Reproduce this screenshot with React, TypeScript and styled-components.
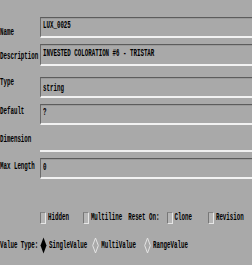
import React from "react";
import styled, { createGlobalStyle } from "styled-components";

const GlobalStyle = createGlobalStyle`
  html, body {
    margin: 0;
    padding: 0;
    background: #a9a9a9;
    overflow: hidden;
  }
`;

const Panel = styled.div`
  width: 252px;
  height: 265px;
  background: #a9a9a9;
  color: #000;
  font-family: "Liberation Mono", monospace;
  font-size: 5.8px;
  font-weight: bold;
  line-height: 8px;
  overflow: hidden;
  box-sizing: border-box;
`;

// narrow bitmap-like font: mono at small size, stretched vertically
const T = styled.span`
  display: inline-block;
  white-space: nowrap;
  transform: scaleY(1.75);
  transform-origin: center;
`;

const Row = styled.div<{ $mt: number; $h?: number }>`
  display: grid;
  grid-template-columns: 40px 1fr;
  margin-top: ${p => p.$mt}px;
  height: ${p => p.$h || 21}px;
`;

const Label = styled.div<{ $pt: number }>`
  padding-top: ${p => p.$pt}px;
  white-space: nowrap;
`;

const TextBox = styled.div<{ $pt: number }>`
  box-sizing: border-box;
  border-top: 1px solid #5c5c5c;
  border-left: 1px solid #6a6a6a;
  border-bottom: 2px solid #f2f2f2;
  box-shadow: inset 0 1px 0 #9a9a9a;
  margin-right: -20px;
  padding: ${p => p.$pt - 1}px 0 0 2px;
  white-space: nowrap;
`;

const EmptyBox = styled.div`
  box-sizing: border-box;
  border-bottom: 2px solid #f2f2f2;
`;

const ToggleRow = styled.div`
  display: flex;
  align-items: center;
  height: 14px;
  margin-top: 32px;
  padding-left: 40px;
  white-space: nowrap;
`;

const Toggle = styled.div<{ $gap: number }>`
  display: flex;
  align-items: center;
  gap: 2px;
  margin-right: ${p => p.$gap}px;
`;

const CheckBox = styled.span`
  display: inline-block;
  width: 6px;
  height: 12px;
  box-sizing: border-box;
  border-left: 1px solid #767676;
  border-top: 1px solid #868686;
  border-right: 1px solid #e6e6e6;
  border-bottom: 1px solid #e6e6e6;
  background: #b6b6b6;
`;

const ResetLabel = styled.span`
  margin-right: 7px;
`;

const RadioRow = styled.div`
  display: flex;
  align-items: center;
  height: 17px;
  margin-top: 12px;
  white-space: nowrap;
`;

const RadioLabel = styled.span`
  width: 40px;
`;

const Radio = styled.div<{ $gap: number }>`
  display: flex;
  align-items: center;
  gap: 2px;
  margin-right: ${p => p.$gap}px;
`;

const Diamond = ({ on }: { on: boolean }) => (
  <svg width="7" height="17" viewBox="0 0 7 17">
    {on ? (
      <polygon points="3.5,0.5 6.5,8.5 3.5,16.5 0.5,8.5" fill="#000" />
    ) : (
      <polygon
        points="3.5,1 6.3,8.5 3.5,16 0.7,8.5"
        fill="none"
        stroke="#e4e4e4"
        strokeWidth="1"
      />
    )}
  </svg>
);

export default function App() {
  return (
    <>
      <GlobalStyle />
      <Panel>
        <Row $mt={17}>
          <Label $pt={12}><T>Name</T></Label>
          <TextBox $pt={5}><T>LUX_0025</T></TextBox>
        </Row>
        <Row $mt={6} $h={22}>
          <Label $pt={9}><T>Description</T></Label>
          <TextBox $pt={6}><T>INVESTED COLORATION #6 - TRISTAR</T></TextBox>
        </Row>
        <Row $mt={11}>
          <Label $pt={2}><T>Type</T></Label>
          <TextBox $pt={8}><T>string</T></TextBox>
        </Row>
        <Row $mt={6}>
          <Label $pt={4}><T>Default</T></Label>
          <TextBox $pt={5}><T>?</T></TextBox>
        </Row>
        <Row $mt={6}>
          <Label $pt={5}><T>Dimension</T></Label>
          <EmptyBox />
        </Row>
        <Row $mt={6}>
          <Label $pt={5}><T>Max Length</T></Label>
          <TextBox $pt={6}><T>0</T></TextBox>
        </Row>
        <ToggleRow>
          <Toggle $gap={14}>
            <CheckBox />
            <T>Hidden</T>
          </Toggle>
          <Toggle $gap={6}>
            <CheckBox />
            <T>Multiline</T>
          </Toggle>
          <ResetLabel><T>Reset On:</T></ResetLabel>
          <Toggle $gap={16}>
            <CheckBox />
            <T>Clone</T>
          </Toggle>
          <Toggle $gap={0}>
            <CheckBox />
            <T>Revision</T>
          </Toggle>
        </ToggleRow>
        <RadioRow>
          <RadioLabel><T>Value Type:</T></RadioLabel>
          <Radio $gap={5}>
            <Diamond on />
            <T>SingleValue</T>
          </Radio>
          <Radio $gap={8}>
            <Diamond on={false} />
            <T>MultiValue</T>
          </Radio>
          <Radio $gap={0}>
            <Diamond on={false} />
            <T>RangeValue</T>
          </Radio>
        </RadioRow>
      </Panel>
    </>
  );
}
